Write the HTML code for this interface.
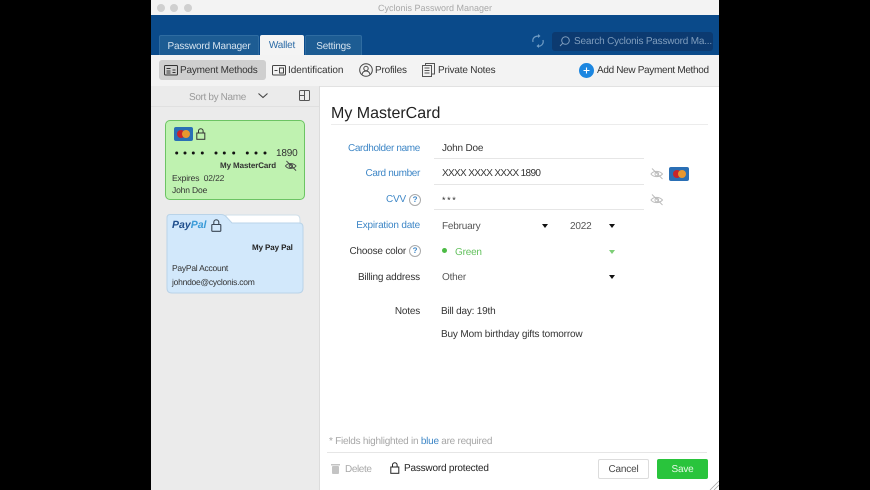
<!DOCTYPE html>
<html><head><meta charset="utf-8"><style>
html,body{margin:0;padding:0;width:870px;height:490px;overflow:hidden;background:#000}
body{position:relative;font-family:"Liberation Sans",sans-serif;font-size:10px;letter-spacing:-.2px;color:#333;text-rendering:geometricPrecision}
#w{position:absolute;left:151px;top:0;width:568px;height:490px;background:#fff;overflow:hidden;filter:blur(.3px)}
.a{position:absolute}
.t{position:absolute;white-space:nowrap;line-height:14px}
.r{text-align:right}
.b{color:#3d86c6}
svg{position:absolute;overflow:visible}
.tab{position:absolute;top:35px;height:20px;background:#1d5c93;border:1px solid #2f6ca1;border-bottom:0;box-sizing:border-box;border-radius:2px 2px 0 0;color:#d5e3ef;text-align:center;line-height:20px}
.l{position:absolute;height:1px;background:#e6e6e6}
.ar{position:absolute;width:0;height:0;border-left:3.5px solid transparent;border-right:3.5px solid transparent;border-top:4px solid #111}
.q{position:absolute;width:10px;height:10px;border:1px solid #aaa;border-radius:50%;font-size:8px;line-height:10px;text-align:center;color:#3d86c6;font-weight:bold}
.s{font-size:8.5px;letter-spacing:-.15px}
</style></head><body>
<div id="w">
<!-- title bar -->
<div class="a" style="left:0;top:0;width:568px;height:15px;background:#f3f3f3"></div>
<div class="a" style="left:6px;top:4px;width:8px;height:8px;border-radius:50%;background:#d0d0d0"></div>
<div class="a" style="left:19px;top:4px;width:8px;height:8px;border-radius:50%;background:#d0d0d0"></div>
<div class="a" style="left:33px;top:4px;width:8px;height:8px;border-radius:50%;background:#d0d0d0"></div>
<div class="t" style="left:0;width:568px;text-align:center;top:1px;color:#a8a8a8;font-size:9px;letter-spacing:0">Cyclonis Password Manager</div>
<!-- header -->
<div class="a" style="left:0;top:15px;width:568px;height:40px;background:#0a4a8a"></div>
<div class="tab" style="left:8px;width:100px;line-height:22px">Password Manager</div>
<div class="a" style="left:109px;top:35px;width:44px;height:20px;background:#f4f4f4;color:#2a6aa5;text-align:center;line-height:22px;border-radius:2px 2px 0 0">Wallet</div>
<div class="tab" style="left:154px;width:57px;line-height:22px">Settings</div>
<svg style="left:380px;top:33px" width="14" height="16" viewBox="0 0 14 16" fill="none" stroke="#6f9bc4" stroke-width="1.2"><path d="M2 9C1 5 4 3 8 3M6 13c4 1 7-2 6-6"/><path d="M7 1l2.500 2L7 5M8 11l-2.500 2L8 15" fill="#6f9bc4" stroke="none"/></svg>
<div class="a" style="left:401px;top:32px;width:161px;height:19px;background:#0c3a70;border-radius:3px"></div>
<svg style="left:408px;top:36px" width="11" height="11" viewBox="0 0 11 11" fill="none" stroke="#7f9dbd" stroke-width="1"><circle cx="6.500" cy="4.500" r="3.800"/><path d="M3.800 7.200L1 10"/></svg>
<div class="t" style="left:423px;top:35px;color:#7f9dbd">Search Cyclonis Password Ma...</div>
<!-- toolbar -->
<div class="a" style="left:0;top:55px;width:568px;height:31px;background:#f3f3f3;border-bottom:1px solid #e2e2e2"></div>
<div class="a" style="left:8px;top:60px;width:107px;height:20px;background:#cfcfcf;border-radius:3px"></div>
<svg style="left:13px;top:65px" width="14" height="11" viewBox="0 0 14 11" fill="none" stroke="#333" stroke-width="1"><rect x=".5" y=".5" width="13" height="9.500" rx="1"/><path d="M2.500 3.500h4M2.500 6h4M2.500 8h4M8.500 5h3M8.500 7.500h3"/></svg>
<div class="t" style="left:29px;top:64px;color:#333">Payment Methods</div>
<svg style="left:121px;top:65px" width="14" height="11" viewBox="0 0 14 11" fill="none" stroke="#444" stroke-width="1"><rect x=".5" y=".5" width="13" height="9.500" rx="1"/><rect x="7.500" y="3" width="4" height="5"/><path d="M2.500 5.500h3"/></svg>
<div class="t" style="left:137px;top:64px;color:#333;letter-spacing:-.05px">Identification</div>
<svg style="left:208px;top:63px" width="14" height="14" viewBox="0 0 14 14" fill="none" stroke="#444" stroke-width="1"><circle cx="7" cy="7" r="6.300"/><circle cx="7" cy="5.500" r="2.200"/><path d="M3 11.500c.5-2.500 2-3.500 4-3.500s3.500 1 4 3.500"/></svg>
<div class="t" style="left:224px;top:64px;color:#333">Profiles</div>
<svg style="left:271px;top:63px" width="13" height="14" viewBox="0 0 13 14" fill="none" stroke="#555" stroke-width="1"><rect x="3.500" y=".5" width="9" height="10.500"/><rect x=".5" y="2.500" width="9" height="11" fill="#f3f3f3"/><path d="M2.500 5h5M2.500 7.500h5M2.500 10h5"/></svg>
<div class="t" style="left:287px;top:64px;color:#333">Private Notes</div>
<div class="a" style="left:428px;top:63px;width:15px;height:15px;border-radius:50%;background:#1c86e0"></div>
<svg style="left:428px;top:63px" width="15" height="15" fill="none" stroke="#fff" stroke-width="1.100"><path d="M7.500 4.500v6M4.500 7.500h6"/></svg>
<div class="t" style="left:446px;top:64px;color:#333;letter-spacing:-.33px">Add New Payment Method</div>
<!-- sidebar -->
<div class="a" style="left:0;top:86px;width:168px;height:404px;background:#ebebeb;border-right:1px solid #dcdcdc"></div>
<div class="a" style="left:0;top:106px;width:168px;height:1px;background:#e0e0e0"></div>
<div class="t" style="left:38px;top:91px;color:#9a9a9a;letter-spacing:-.35px">Sort by Name</div>
<svg style="left:107px;top:93px" width="10" height="6" fill="none" stroke="#444" stroke-width="1.100"><path d="M.5 .5L5 4.500L9.500 .5"/></svg>
<svg style="left:148px;top:90px" width="11" height="11" fill="none" stroke="#555" stroke-width="1"><rect x=".5" y=".5" width="10" height="10" rx="1"/><path d="M5.500 .5v10M.5 5.500h5"/></svg>
<!-- green card -->
<div class="a" style="left:14px;top:120px;width:140px;height:80px;box-sizing:border-box;background:#bff2b0;border:1.500px solid #6cc463;border-radius:5px"></div>
<div class="a" style="left:23px;top:127px;width:19px;height:14px;background:#2a6fb5;border-radius:2px"></div>
<div class="a" style="left:26px;top:130px;width:8px;height:8px;border-radius:50%;background:#c8252b"></div>
<div class="a" style="left:31px;top:130px;width:8px;height:8px;border-radius:50%;background:#e8972e"></div>
<svg style="left:45px;top:128px" width="10" height="12" fill="none" stroke="#333" stroke-width="1"><rect x=".8" y="5" width="8" height="6.300"/><path d="M2.500 5V3a2.300 2.300 0 0 1 4.600 0v2"/></svg>
<svg style="left:24px;top:150px" width="95" height="6" fill="#111"><circle cx="1.700" cy="3" r="1.500"/><circle cx="10" cy="3" r="1.500"/><circle cx="18.300" cy="3" r="1.500"/><circle cx="27.300" cy="3" r="1.500"/><circle cx="41" cy="3" r="1.500"/><circle cx="49.300" cy="3" r="1.500"/><circle cx="58.700" cy="3" r="1.500"/><circle cx="72.300" cy="3" r="1.500"/><circle cx="81" cy="3" r="1.500"/><circle cx="90" cy="3" r="1.500"/></svg>
<div class="t" style="left:125px;top:147px;color:#333">1890</div>
<div class="t" style="left:69px;top:159px;color:#333;font-weight:bold;font-size:8px;letter-spacing:-.1px">My MasterCard</div>
<svg style="left:134px;top:160px" width="12" height="12" viewBox="0 0 13 12" fill="none" stroke="#444" stroke-width="1"><path d="M.5 6C3 2.500 9 2.500 12 6C9 9.500 3 9.500 .5 6z"/><circle cx="6.300" cy="6" r="1.800"/><path d="M1.500 .5L12 11"/></svg>
<div class="t s" style="left:21px;top:171px;color:#333">Expires&nbsp; 02/22</div>
<div class="t s" style="left:21px;top:183px;color:#333">John Doe</div>
<!-- paypal card -->
<svg style="left:15px;top:214px" width="138" height="80" viewBox="0 0 138 80"><path d="M60 1H130q4 0 4 5v6H60z" fill="#fff" stroke="#cfdfea"/><path d="M4 .5H55q3 0 5 2L66 9H133q4 0 4 4V74q0 5-5 5H6q-5 0-5-5V4q0-3.500 3-3.500z" fill="#d2e8fb" stroke="#b9d3e8"/></svg>
<div class="t" style="left:21px;top:218px;font-size:10.500px;letter-spacing:0;font-weight:bold;font-style:italic;color:#1f4e8c">Pay<span style="color:#3a9bd8">Pal</span></div>
<svg style="left:60px;top:219px" width="11" height="13" fill="none" stroke="#3a4654" stroke-width="1.100"><rect x=".8" y="5.500" width="9" height="6.800" rx=".5"/><path d="M2.800 5.500V3.300a2.500 2.500 0 0 1 5 0v2.200"/></svg>
<div class="t" style="left:101px;top:241px;color:#222;font-weight:bold;font-size:8px;letter-spacing:-.1px">My Pay Pal</div>
<div class="t s" style="left:21px;top:261px;color:#333;letter-spacing:-.25px">PayPal Account</div>
<div class="t s" style="left:21px;top:275px;color:#333;letter-spacing:-.25px">johndoe@cyclonis.com</div>
<!-- form -->
<div class="t" style="left:180px;top:105px;font-size:16px;letter-spacing:0;line-height:18px;color:#222">My MasterCard</div>
<div class="l" style="left:180px;top:124px;width:377px;background:#ececec"></div>
<div class="t r b" style="right:299px;top:142px;letter-spacing:-.35px">Cardholder name</div>
<div class="t" style="left:291px;top:142px;color:#333">John Doe</div>
<div class="l" style="left:283px;top:158px;width:210px"></div>
<div class="t r b" style="right:299px;top:167px;letter-spacing:-.35px">Card number</div>
<div class="t" style="left:291px;top:167px;color:#333;letter-spacing:-.65px">XXXX XXXX XXXX 1890</div>
<div class="l" style="left:283px;top:184px;width:210px"></div>
<div class="t r b" style="right:313px;top:193px">CVV</div>
<div class="q" style="left:258px;top:194px">?</div>
<div class="t" style="left:291px;top:193px;color:#333;font-size:9px;letter-spacing:1.6px">***</div>
<div class="l" style="left:283px;top:209px;width:210px"></div>
<div class="t r b" style="right:299px;top:219px">Expiration date</div>
<div class="t" style="left:291px;top:220px;color:#555">February</div>
<div class="ar" style="left:391px;top:224px"></div>
<div class="t" style="left:419px;top:220px;color:#555">2022</div>
<div class="ar" style="left:458px;top:224px"></div>
<div class="t r" style="right:313px;top:245px;color:#333">Choose color</div>
<div class="q" style="left:258px;top:245px">?</div>
<div class="a" style="left:291px;top:248px;width:5px;height:5px;border-radius:50%;background:#4cbb45"></div>
<div class="t" style="left:304px;top:246px;color:#62c05c">Green</div>
<div class="ar" style="left:458px;top:250px;border-top-color:#7cce76"></div>
<div class="t r" style="right:299px;top:271px;color:#333">Billing address</div>
<div class="t" style="left:291px;top:271px;color:#555">Other</div>
<div class="ar" style="left:458px;top:275px"></div>
<div class="t r" style="right:299px;top:305px;color:#333">Notes</div>
<div class="t" style="left:290px;top:305px;color:#333">Bill day: 19th</div>
<div class="t" style="left:290px;top:328px;color:#333;letter-spacing:-.15px">Buy Mom birthday gifts tomorrow</div>
<!-- eye icons -->
<svg style="left:499px;top:168px" width="14" height="12" viewBox="0 0 13 12" fill="none" stroke="#bdbdbd" stroke-width="1"><path d="M.5 6C3 2.500 9 2.500 12 6C9 9.500 3 9.500 .5 6z"/><circle cx="6.300" cy="6" r="1.800"/><path d="M1.500 .5L12 11"/></svg>
<svg style="left:499px;top:194px" width="14" height="12" viewBox="0 0 13 12" fill="none" stroke="#bdbdbd" stroke-width="1"><path d="M.5 6C3 2.500 9 2.500 12 6C9 9.500 3 9.500 .5 6z"/><circle cx="6.300" cy="6" r="1.800"/><path d="M1.500 .5L12 11"/></svg>
<div class="a" style="left:518px;top:167px;width:20px;height:14px;background:#2a6fb5;border-radius:2px"></div>
<div class="a" style="left:522px;top:170px;width:8px;height:8px;border-radius:50%;background:#c8252b"></div>
<div class="a" style="left:527px;top:170px;width:8px;height:8px;border-radius:50%;background:#e8972e"></div>
<!-- footer -->
<div class="t" style="left:178px;top:435px;color:#a6a6a6;letter-spacing:-.25px">* Fields highlighted in <span class="b">blue</span> are required</div>
<div class="l" style="left:176px;top:452px;width:380px"></div>
<svg style="left:180px;top:463px" width="9" height="11" fill="#c4c4c4"><rect x="0" y="1" width="9" height="1.500"/><rect x="1" y="3" width="7" height="8" rx="1"/></svg>
<div class="t" style="left:194px;top:463px;color:#a8a8a8;letter-spacing:-.4px">Delete</div>
<svg style="left:239px;top:462px" width="10" height="12" fill="none" stroke="#222" stroke-width="1"><rect x=".8" y="5" width="8" height="6.300"/><path d="M2.500 5V3a2.300 2.300 0 0 1 4.600 0v2"/></svg>
<div class="t" style="left:253px;top:462px;color:#222">Password protected</div>
<div class="a" style="left:447px;top:459px;width:51px;height:20px;box-sizing:border-box;border:1px solid #dcdcdc;border-radius:2px;text-align:center;line-height:20px;color:#444">Cancel</div>
<div class="a" style="left:506px;top:459px;width:51px;height:20px;background:#29c43c;border-radius:2px;text-align:center;line-height:22px;color:#e6f9e6">Save</div>
<svg style="left:558px;top:480px" width="10" height="10" stroke="#aaa" stroke-width=".8"><path d="M1 10L10 1M5 10L10 5"/></svg>
</div>
</body></html>
